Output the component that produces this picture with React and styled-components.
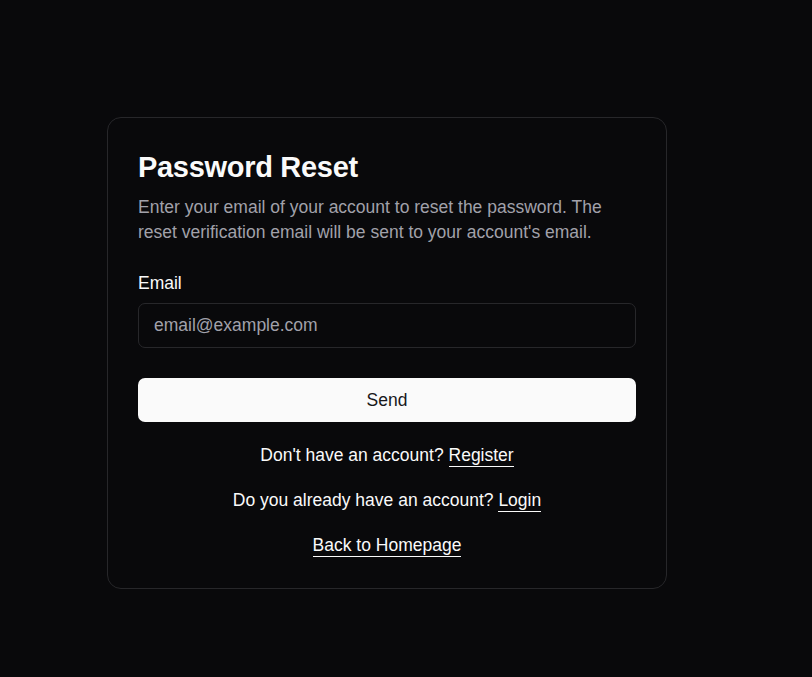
import React from "react";
import styled, { createGlobalStyle } from "styled-components";

const GlobalStyle = createGlobalStyle`
  html, body {
    margin: 0;
    padding: 0;
    background: #09090b;
    font-family: "Liberation Sans", Arial, sans-serif;
    color: #fafafa;
  }
`;

export default function App() {
  return (
    <>
      <GlobalStyle />
      <Page>
        <Card>
          <Title>Password Reset</Title>
          <Description>
            Enter your email of your account to reset the password. The reset
            verification email will be sent to your account's email.
          </Description>
          <Form onSubmit={(e) => e.preventDefault()}>
            <Field>
              <Label htmlFor="email">Email</Label>
              <Input id="email" type="email" placeholder="email@example.com" />
            </Field>
            <SendButton type="submit">Send</SendButton>
          </Form>
          <Links>
            <LinkRow>
              Don't have an account? <TextLink href="#">Register</TextLink>
            </LinkRow>
            <LinkRow>
              Do you already have an account? <TextLink href="#">Login</TextLink>
            </LinkRow>
            <LinkRow>
              <TextLink href="#">Back to Homepage</TextLink>
            </LinkRow>
          </Links>
        </Card>
      </Page>
    </>
  );
}

const Page = styled.main`
  min-height: 677px;
  box-sizing: border-box;
  padding: 117px 0 0 107px;
`;

const Card = styled.section`
  width: 560px;
  box-sizing: border-box;
  border: 1px solid #27272a;
  border-radius: 14px;
  padding: 31px 30px 31px;
  background: #09090b;
`;

const Title = styled.h1`
  margin: 0;
  font-size: 29px;
  font-weight: 700;
  line-height: 36px;
  letter-spacing: -0.3px;
`;

const Description = styled.p`
  margin: 10px 0 0;
  font-size: 17.5px;
  line-height: 25px;
  color: #a1a1aa;
`;

const Form = styled.form`
  margin-top: 28px;
  display: flex;
  flex-direction: column;
  gap: 30px;
`;

const Field = styled.div`
  display: flex;
  flex-direction: column;
  gap: 10px;
`;

const Label = styled.label`
  font-size: 17.5px;
  line-height: 20px;
  color: #fafafa;
`;

const Input = styled.input`
  height: 45px;
  box-sizing: border-box;
  border: 1px solid #27272a;
  border-radius: 7px;
  background: transparent;
  padding: 0 15px;
  font-family: inherit;
  font-size: 17.5px;
  color: #fafafa;
  outline: none;

  &::placeholder {
    color: #a1a1aa;
  }
`;

const SendButton = styled.button`
  height: 44px;
  border: none;
  border-radius: 7px;
  background: #fafafa;
  color: #18181b;
  font-family: inherit;
  font-size: 17.5px;
  cursor: pointer;
`;

const Links = styled.div`
  margin-top: 22px;
  display: flex;
  flex-direction: column;
  align-items: center;
  gap: 22px;
`;

const LinkRow = styled.p`
  margin: 0;
  font-size: 17.5px;
  line-height: 23px;
  color: #fafafa;
  text-align: center;
`;

const TextLink = styled.a`
  color: #fafafa;
  text-decoration: none;
  border-bottom: 1px solid #fafafa;
  padding-bottom: 1px;
`;
